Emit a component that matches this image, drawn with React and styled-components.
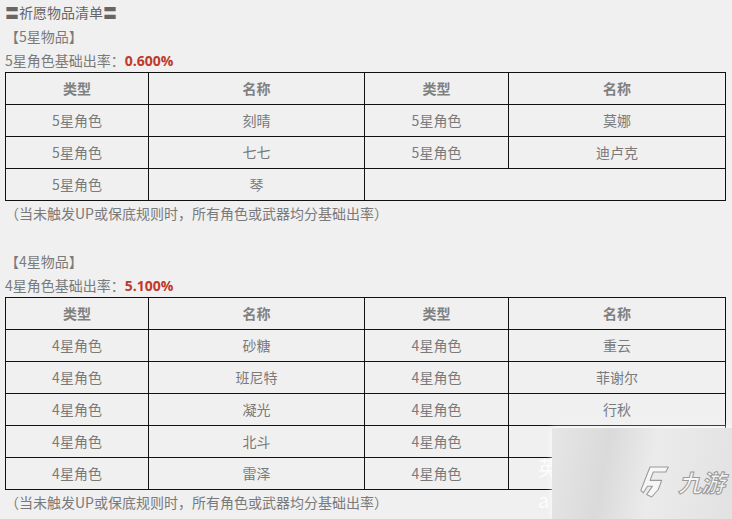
import React from 'react';
import styled, { createGlobalStyle } from 'styled-components';

const GlobalStyle = createGlobalStyle`
  html, body {
    margin: 0;
    padding: 0;
    background: #f0f0f0;
  }
  body {
    font-family: "Noto Sans CJK SC", "Noto Sans", sans-serif;
    font-size: 14px;
    color: #777;
  }
`;

const Page = styled.div`
  position: relative;
  width: 732px;
  height: 519px;
  overflow: hidden;
  padding-left: 5px;
  box-sizing: border-box;
`;

const Line = styled.div`
  height: 24px;
  line-height: 24px;
  white-space: nowrap;
  color: ${p => (p.$dark ? '#666' : '#7a7a7a')};
`;

const Rate = styled.strong`
  color: #c0392b;
  font-weight: bold;
  font-size: 14px;
  font-family: "Open Sans", "Noto Sans", sans-serif;
`;

const Table = styled.table`
  border-collapse: collapse;
  table-layout: fixed;
  width: 720px;
`;

const Cell = styled.td`
  border: 1px solid #111;
  height: 31px;
  padding: 0;
  text-align: center;
  vertical-align: middle;
  color: ${p => (p.$head ? '#808080' : '#7a7a7a')};
  font-weight: ${p => (p.$head ? 'bold' : 'normal')};
  line-height: 31px;
`;

const Watermark = styled.div`
  position: absolute;
  left: 552px;
  top: 428px;
  width: 180px;
  height: 91px;
  background: linear-gradient(100deg, #e6e6e6 0%, #dadada 30%, #ebebeb 55%, #e2e2e2 100%);
  box-shadow: 0 0 6px rgba(255, 255, 255, 0.9);
  display: flex;
  align-items: center;
  justify-content: flex-end;
  gap: 8px;
  padding-right: 8px;
  padding-top: 16px;
  box-sizing: border-box;
`;

const LogoText = styled.span`
  font-size: 24px;
  font-style: italic;
  font-weight: bold;
  color: #f6f6f6;
  -webkit-text-stroke: 1px #9a9a9a;
  letter-spacing: -1px;
  line-height: 30px;
`;

const GhostText = styled.div`
  position: absolute;
  left: 538px;
  top: ${p => p.$top}px;
  font-size: 20px;
  color: rgba(255, 255, 255, 0.85);
  line-height: 20px;
`;

const Logo = () => (
  <svg width="30" height="38" viewBox="0 0 36 42">
    <path
      d="M12 3 L34 3 L31 9 L16 9 L12 19 L26 19 L22 30 L14 39 L8 36 L15 26 L9 26 L4 34 L1 31 Z"
      fill="#f6f6f6"
      stroke="#9a9a9a"
      strokeWidth="1.3"
      strokeLinejoin="round"
    />
  </svg>
);

const colWidths = [143, 216, 144, 217];

const ItemTable = ({ rows }) => (
  <Table>
    <colgroup>
      {colWidths.map((w, i) => (
        <col key={i} style={{ width: w }} />
      ))}
    </colgroup>
    <tbody>
      <tr>
        <Cell $head>类型</Cell>
        <Cell $head>名称</Cell>
        <Cell $head>类型</Cell>
        <Cell $head>名称</Cell>
      </tr>
      {rows.map((r, i) => (
        <tr key={i}>
          <Cell>{r[0]}</Cell>
          <Cell>{r[1]}</Cell>
          {r.length > 2 ? (
            <>
              <Cell>{r[2]}</Cell>
              <Cell>{r[3]}</Cell>
            </>
          ) : (
            <Cell colSpan={2} />
          )}
        </tr>
      ))}
    </tbody>
  </Table>
);

const fiveStar = [
  ['5星角色', '刻晴', '5星角色', '莫娜'],
  ['5星角色', '七七', '5星角色', '迪卢克'],
  ['5星角色', '琴'],
];

const fourStar = [
  ['4星角色', '砂糖', '4星角色', '重云'],
  ['4星角色', '班尼特', '4星角色', '菲谢尔'],
  ['4星角色', '凝光', '4星角色', '行秋'],
  ['4星角色', '北斗', '4星角色', ''],
  ['4星角色', '雷泽', '4星角色', ''],
];

const note = '（当未触发UP或保底规则时，所有角色或武器均分基础出率）';

export default function App() {
  return (
    <>
      <GlobalStyle />
      <Page>
        <Line $dark>〓祈愿物品清单〓</Line>
        <Line>【5星物品】</Line>
        <Line>
          5星角色基础出率：<Rate>0.600%</Rate>
        </Line>
        <ItemTable rows={fiveStar} />
        <Line>{note}</Line>
        <Line />
        <Line>【4星物品】</Line>
        <Line>
          4星角色基础出率：<Rate>5.100%</Rate>
        </Line>
        <ItemTable rows={fourStar} />
        <Line>{note}</Line>
        <GhostText $top={458}>英</GhostText>
        <GhostText $top={490}>a</GhostText>
        <Watermark>
          <Logo />
          <LogoText>九游</LogoText>
        </Watermark>
      </Page>
    </>
  );
}
